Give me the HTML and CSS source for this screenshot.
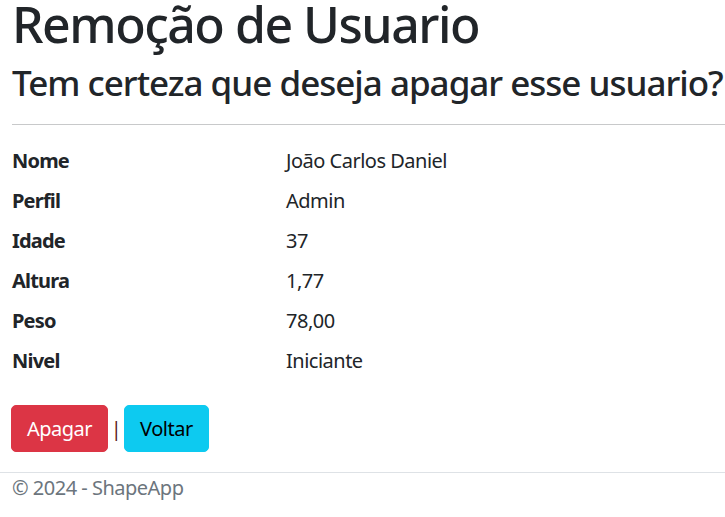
FILE: index.html
```html
<!DOCTYPE html>
<html lang="pt-BR">
<head>
<meta charset="utf-8">
<title>Remoção de Usuario</title>
<link rel="stylesheet" href="styles.css">
</head>
<body>
<main class="main">
  <h1 class="title">Remoção de Usuario</h1>
  <h2 class="subtitle">Tem certeza que deseja apagar esse usuario?</h2>
  <hr class="divider">
  <dl class="details">
    <dt>Nome</dt><dd>João Carlos Daniel</dd>
    <dt>Perfil</dt><dd>Admin</dd>
    <dt>Idade</dt><dd>37</dd>
    <dt>Altura</dt><dd>1,77</dd>
    <dt>Peso</dt><dd>78,00</dd>
    <dt>Nivel</dt><dd>Iniciante</dd>
  </dl>
  <div class="actions">
    <button class="btn btn-danger" type="button">Apagar</button>
    <span class="sep">|</span>
    <button class="btn btn-info" type="button">Voltar</button>
  </div>
</main>
<footer class="footer">© 2024 - ShapeApp</footer>
</body>
</html>
```
FILE: styles.css
```css
html, body {
  margin: 0;
  padding: 0;
  background: #fff;
}
body {
  font-family: "Noto Sans", "Open Sans", sans-serif;
  font-size: 20px;
  line-height: 30px;
  letter-spacing: -0.5px;
  color: #212529;
  overflow: hidden;
}
.main {
  padding: 0 0 0 12px;
}
.title {
  margin: 0;
  font-size: 50px;
  line-height: 48px;
  font-weight: 500;
  letter-spacing: -1.5px;
  white-space: nowrap;
}
.subtitle {
  margin: 14px 0 0;
  font-size: 35px;
  line-height: 42px;
  font-weight: 500;
  letter-spacing: -1px;
  white-space: nowrap;
}
.divider {
  margin: 20px 0 21px;
  border: 0;
  border-top: 1px solid #c8c9ca;
  height: 0;
}
.details {
  display: grid;
  grid-template-columns: 274px 1fr;
  margin: 0;
}
.details dt {
  font-weight: 700;
  letter-spacing: -0.8px;
  margin: 0 0 10px;
}
.details dd {
  margin: 0 0 10px;
}
.actions {
  display: flex;
  align-items: center;
  margin-top: 19px;
  margin-left: -1px;
}
.btn {
  font-family: inherit;
  font-size: 20px;
  line-height: 30px;
  letter-spacing: -0.5px;
  padding: 7.5px 15px;
  border: 1px solid transparent;
  border-radius: 5px;
  cursor: pointer;
}
.btn-danger {
  background: #dc3545;
  border-color: #dc3545;
  color: #fff;
}
.btn-info {
  background: #0dcaf0;
  border-color: #0dcaf0;
  color: #000;
}
.sep {
  display: inline-block;
  width: 16px;
  text-align: center;
  color: #5a1a1a;
}
.footer {
  margin-top: 20px;
  border-top: 1px solid #dee2e6;
  padding: 0 12px;
  color: #6c757d;
  line-height: 30px;
}
```
